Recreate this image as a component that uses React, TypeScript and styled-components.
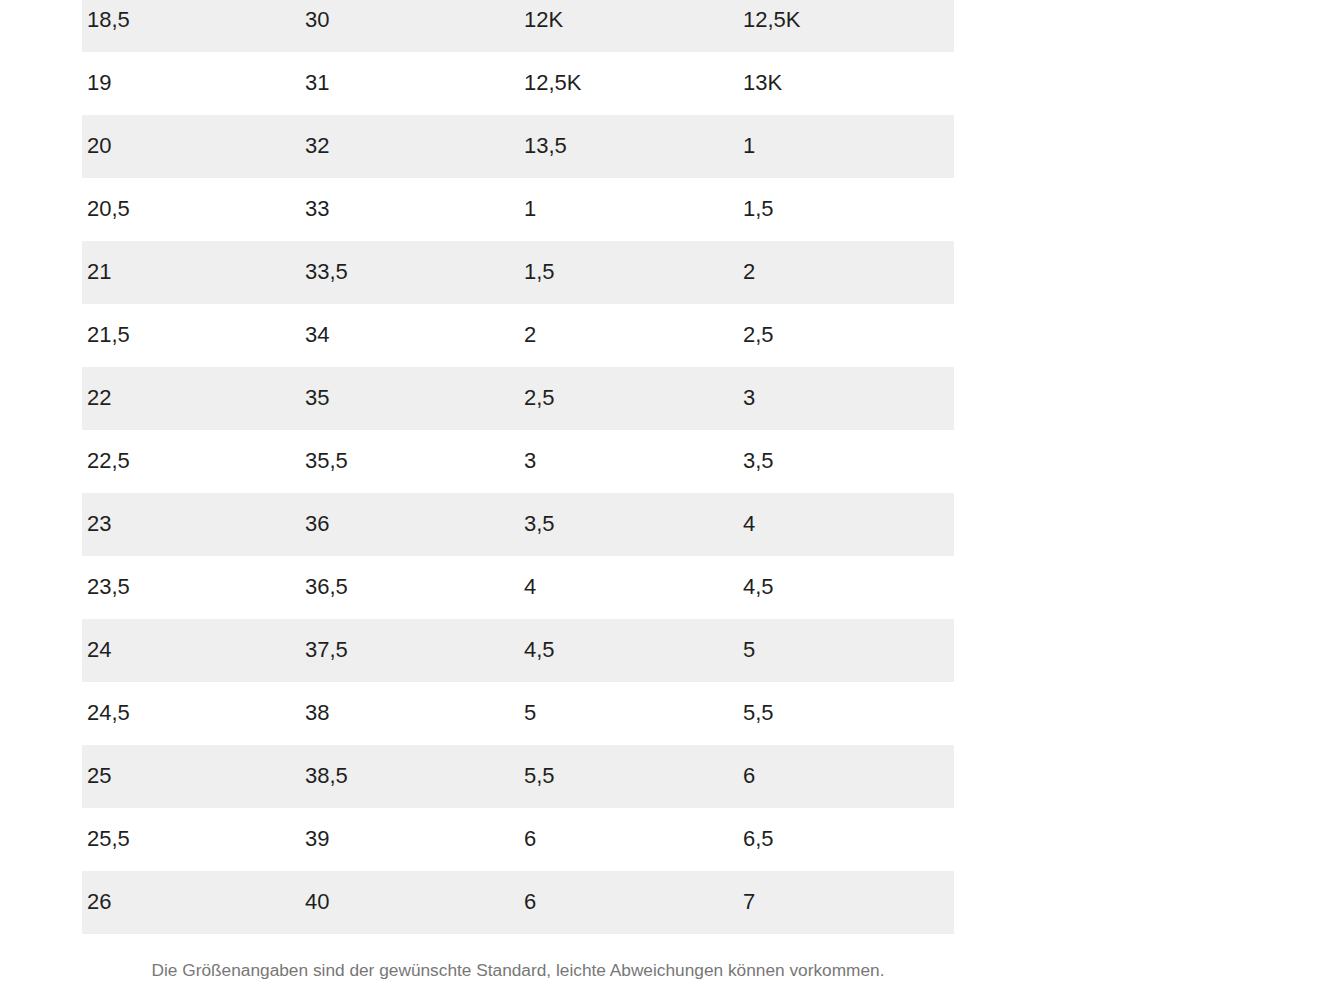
import React from "react";
import styled, { createGlobalStyle } from "styled-components";

const Global = createGlobalStyle`
  html, body { margin: 0; padding: 0; background: #ffffff; }
  body { font-family: "Liberation Sans", Arial, sans-serif; overflow: hidden; }
`;

const Page = styled.div`
  width: 1344px;
  height: 1000px;
  overflow: hidden;
  padding-left: 82px;
  box-sizing: border-box;
`;

const Wrap = styled.div`
  width: 872px;
  margin-top: -11px;
`;

const Table = styled.div`
  display: flex;
  flex-direction: column;
`;

const Row = styled.div<{ $shade: boolean }>`
  display: grid;
  grid-template-columns: 218px 219px 219px 1fr;
  height: 63px;
  align-items: center;
  background: ${(p) => (p.$shade ? "#efefef" : "#ffffff")};
`;

const Cell = styled.div`
  padding: 0 0 1px 5px;
  font-size: 22px;
  color: #1f1f1f;
  line-height: 1;
`;

const Note = styled.p`
  margin: 26px 0 0;
  text-align: center;
  font-size: 17.3px;
  color: #777777;
`;

const rows: string[][] = [
  ["18,5", "30", "12K", "12,5K"],
  ["19", "31", "12,5K", "13K"],
  ["20", "32", "13,5", "1"],
  ["20,5", "33", "1", "1,5"],
  ["21", "33,5", "1,5", "2"],
  ["21,5", "34", "2", "2,5"],
  ["22", "35", "2,5", "3"],
  ["22,5", "35,5", "3", "3,5"],
  ["23", "36", "3,5", "4"],
  ["23,5", "36,5", "4", "4,5"],
  ["24", "37,5", "4,5", "5"],
  ["24,5", "38", "5", "5,5"],
  ["25", "38,5", "5,5", "6"],
  ["25,5", "39", "6", "6,5"],
  ["26", "40", "6", "7"],
];

export default function App() {
  return (
    <>
      <Global />
      <Page>
        <Wrap>
          <Table>
            {rows.map((r, i) => (
              <Row key={i} $shade={i % 2 === 0}>
                {r.map((c, j) => (
                  <Cell key={j}>{c}</Cell>
                ))}
              </Row>
            ))}
          </Table>
          <Note>
            Die Größenangaben sind der gewünschte Standard, leichte Abweichungen können vorkommen.
          </Note>
        </Wrap>
      </Page>
    </>
  );
}
